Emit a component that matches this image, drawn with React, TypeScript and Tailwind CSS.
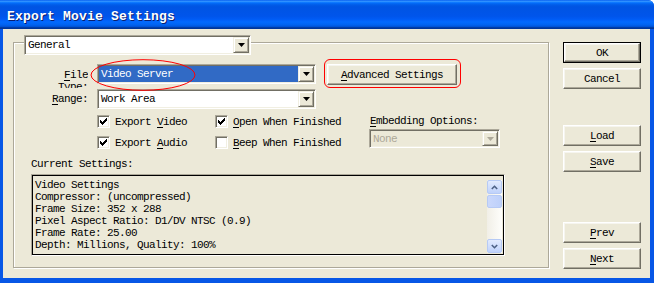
import React from "react";

const FONT = "font-['Liberation_Mono',monospace] text-[11px] tracking-[-0.6px] leading-[12px]";

function Arrow({ disabled }: { disabled?: boolean }) {
  return (
    <svg width="7" height="4" viewBox="0 0 7 4">
      <polygon points="0,0 7,0 3.5,4" fill={disabled ? "#ACA899" : "#000"} />
    </svg>
  );
}

function DropBtn({ disabled }: { disabled?: boolean }) {
  return (
    <div className="w-[16px] h-full flex items-center justify-center bg-[#ECE9D8] border border-t-[#F1EFE2] border-l-[#F1EFE2] border-r-[#716F64] border-b-[#716F64] shadow-[inset_1px_1px_0_#fff,inset_-1px_-1px_0_#ACA899]">
      <Arrow disabled={disabled} />
    </div>
  );
}

function Combo({
  text,
  className,
  selected,
  disabled,
}: {
  text: string;
  className: string;
  selected?: boolean;
  disabled?: boolean;
}) {
  return (
    <div
      className={`flex p-px border border-t-[#ACA899] border-l-[#ACA899] border-r-white border-b-white shadow-[inset_1px_1px_0_#716F64,inset_-1px_-1px_0_#F1EFE2] ${
        disabled ? "bg-[#ECE9D8]" : "bg-white"
      } ${className}`}
    >
      <div
        className={`flex-1 flex items-center pl-[2px] whitespace-nowrap ${
          selected ? "bg-[#316AC5] text-white" : disabled ? "text-[#ACA899]" : "text-black"
        }`}
      >
        {text}
      </div>
      <DropBtn disabled={disabled} />
    </div>
  );
}

const CHECK = ["......#", ".....##", "#...###", "##.###.", "#####..", ".###...", "..#...."];

function Check({ checked }: { checked?: boolean }) {
  return (
    <div className="w-[13px] h-[13px] shrink-0 bg-white border border-t-[#ACA899] border-l-[#ACA899] border-r-white border-b-white shadow-[inset_1px_1px_0_#716F64,inset_-1px_-1px_0_#F1EFE2] flex items-center justify-center">
      {checked && (
        <svg width="7" height="7" viewBox="0 0 7 7" shapeRendering="crispEdges">
          {CHECK.flatMap((row, y) =>
            row.split("").map((c, x) => (c === "#" ? <rect key={`${x}-${y}`} x={x} y={y} width="1" height="1" fill="#000" /> : null))
          )}
        </svg>
      )}
    </div>
  );
}

function CheckRow({ checked, children }: { checked?: boolean; children: React.ReactNode }) {
  return (
    <div className="flex items-center gap-[5px] h-[13px] whitespace-nowrap">
      <Check checked={checked} />
      <span>{children}</span>
    </div>
  );
}

function Btn({ children, isDefault, className }: { children: React.ReactNode; isDefault?: boolean; className?: string }) {
  const inner = (
    <div className="w-full h-full flex items-center justify-center bg-[#ECE9D8] border border-t-white border-l-white border-r-[#716F64] border-b-[#716F64] shadow-[inset_-1px_-1px_0_#ACA899,inset_1px_1px_0_#F6F5EF]">
      {children}
    </div>
  );
  return (
    <div className={`h-[21px] ${isDefault ? "border border-black" : ""} ${className ?? ""}`}>{inner}</div>
  );
}

function U({ children }: { children: React.ReactNode }) {
  return <span className="underline underline-offset-[2px]">{children}</span>;
}

function ScrollBtn({ up }: { up?: boolean }) {
  return (
    <div className="h-[14px] rounded-[2px] border border-[#B6CAF5] bg-gradient-to-b from-[#E2EBFE] to-[#BFD2FB] flex items-center justify-center">
      <svg width="7" height="5" viewBox="0 0 7 5">
        <path d={up ? "M0.8 4 L3.5 1.3 L6.2 4" : "M0.8 1 L3.5 3.7 L6.2 1"} stroke="#4D6185" strokeWidth="1.6" fill="none" />
      </svg>
    </div>
  );
}

export default function App() {
  const lines = [
    "Video Settings",
    "Compressor: (uncompressed)",
    "Frame Size: 352 x 288",
    "Pixel Aspect Ratio: D1/DV NTSC (0.9)",
    "Frame Rate: 25.00",
    "Depth: Millions, Quality: 100%",
  ];
  return (
    <div className={`w-[654px] h-[283px] flex flex-col bg-[#0757E6] rounded-tr-[6px] overflow-hidden text-black ${FONT}`}>
      {/* Title bar */}
      <div className="h-[29px] shrink-0 flex items-center pl-[7px] pt-[5px] bg-[linear-gradient(to_bottom,#0058ee_0%,#3593ff_4%,#288eff_6%,#127dff_8%,#036ffc_10%,#0262ee_14%,#0057e5_20%,#0054e3_24%,#0055eb_56%,#005bf5_66%,#026afe_76%,#0062ef_86%,#0052d6_92%,#0040ab_94%,#003092_100%)]">
        <span className="font-['Liberation_Mono',monospace] font-bold text-[13px] leading-[16px] tracking-[0.2px] text-white [text-shadow:1px_1px_0_#0A1E6E]">
          Export Movie Settings
        </span>
      </div>

      {/* Body */}
      <div className="flex-1 ml-[3px] mr-[4px] mb-[5px] bg-[#ECE9D8] flex pt-[13px] pl-[10px]">
        {/* Group panel */}
        <div className="w-[536px] h-[226px] flex flex-col border border-[#ACA899] shadow-[inset_1px_1px_0_#fff,1px_1px_0_#fff]">
          <Combo text="General" className="ml-[10px] -mt-[8px] w-[227px] h-[20px]" />

          {/* File Type row */}
          <div className="flex items-start mt-[9px] h-[20px]">
            <div className="w-[74px] h-[19px] mt-[5px] overflow-hidden text-right">
              <div>
                <U>F</U>ile
              </div>
              <div>Type:</div>
            </div>
            <div className="relative ml-[9px]">
              <Combo text="Video Server" selected className="w-[219px] h-[20px]" />
              <svg className="absolute left-[-7px] top-[-5px]" width="106" height="32" viewBox="0 0 106 32">
                <ellipse cx="53" cy="16" rx="52" ry="15.3" fill="none" stroke="#FF0000" strokeWidth="1" />
              </svg>
            </div>
            <div className="relative ml-[11px]">
              <Btn className="w-[130px] h-[20px]">
                <span>
                  <U>A</U>dvanced Settings
                </span>
              </Btn>
              <div className="absolute left-[-3px] top-[-5px] w-[137px] h-[29px] rounded-[6px] border border-[#FF0000]" />
            </div>
          </div>

          {/* Range row */}
          <div className="flex items-center mt-[5px]">
            <div className="w-[74px] text-right">
              <U>R</U>ange:
            </div>
            <Combo text="Work Area" className="ml-[9px] w-[219px] h-[20px]" />
          </div>

          {/* Checkboxes */}
          <div className="flex ml-[83px] mt-[6px]">
            <div className="w-[118px] flex flex-col gap-[8px]">
              <CheckRow checked>
                Export <U>V</U>ideo
              </CheckRow>
              <CheckRow checked>
                Export <U>A</U>udio
              </CheckRow>
            </div>
            <div className="w-[154px] flex flex-col gap-[8px]">
              <CheckRow checked>
                <U>O</U>pen When Finished
              </CheckRow>
              <CheckRow>
                <U>B</U>eep When Finished
              </CheckRow>
            </div>
            <div className="flex flex-col">
              <div className="pl-px whitespace-nowrap">
                <U>E</U>mbedding Options:
              </div>
              <Combo text="None" disabled className="mt-[2px] w-[131px] h-[19px]" />
            </div>
          </div>

          {/* Current settings */}
          <div className="ml-[17px] mt-[9px]">Current Settings:</div>
          <div className="ml-[17px] mt-[4px] w-[474px] h-[82px] flex p-px border border-t-[#ACA899] border-l-[#ACA899] border-r-white border-b-white shadow-[inset_0_0_0_1px_#000]">
            <div className="flex-1 pl-[2px] pt-[3px] whitespace-pre">
              {lines.map((l) => (
                <div key={l}>{l}</div>
              ))}
            </div>
            <div className="w-[15px] mt-[4px] mb-[1px] mr-px flex flex-col bg-gradient-to-r from-[#F1EFE7] to-[#FEFEFB]">
              <ScrollBtn up />
              <div className="h-[13px] mt-px rounded-[2px] border border-[#B6CAF5] bg-gradient-to-r from-[#CAD8FC] to-[#BDD0FA]" />
              <div className="flex-1" />
              <ScrollBtn />
            </div>
          </div>
        </div>

        {/* Right buttons */}
        <div className="ml-[14px] w-[78px] flex flex-col">
          <Btn isDefault>OK</Btn>
          <Btn className="mt-[5px]">Cancel</Btn>
          <Btn className="mt-[36px]">
            <span>
              <U>L</U>oad
            </span>
          </Btn>
          <Btn className="mt-[5px]">
            <span>
              <U>S</U>ave
            </span>
          </Btn>
          <Btn className="mt-[50px]">
            <span>
              <U>P</U>rev
            </span>
          </Btn>
          <Btn className="mt-[5px]">
            <span>
              <U>N</U>ext
            </span>
          </Btn>
        </div>
      </div>
    </div>
  );
}
